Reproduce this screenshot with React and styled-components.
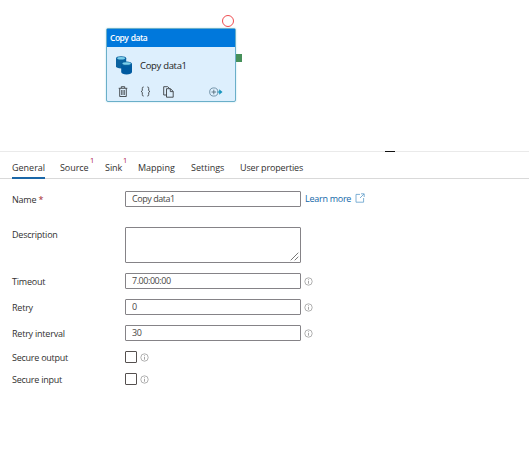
import React from 'react'
import styled, { createGlobalStyle } from 'styled-components'

const GlobalStyle = createGlobalStyle`
  * { box-sizing: border-box; }
  body {
    margin: 0;
    background: #fff;
    color: #323130;
    font-family: "Open Sans", "Noto Sans", sans-serif;
    font-size: 9px;
  }
  input, textarea, button { font-family: inherit; font-size: inherit; }
`

const Page = styled.div`
  height: 473px;
  overflow: hidden;
`

const Canvas = styled.section`
  height: 152px;
  padding: 28px 0 0 106px;
  border-bottom: 1px solid #eaeaea;
  position: relative;
`

const Activity = styled.div`
  position: relative;
  width: 130px;
  height: 74px;
  background: #ddeffd;
  border: 1px solid #6aafc9;
  border-radius: 2px;
  box-shadow: 0 0 2px #b5dcea;
`

const ActivityType = styled.div`
  height: 18px;
  padding-left: 3px;
  line-height: 18px;
  font-size: 8.5px;
  font-weight: 600;
  letter-spacing: -0.5px;
  word-spacing: 0.6px;
  color: #fff;
  background: #0078dc;
`

const ActivityBody = styled.div`
  display: flex;
  align-items: center;
  height: 36px;
  padding-left: 8px;
  gap: 7px;
  font-size: 9.5px;
  letter-spacing: -0.32px;
  color: #222;
`

const ActivityActions = styled.div`
  display: flex;
  align-items: center;
  height: 17px;
  padding: 0 12px 0 11px;
  gap: 12px;
  svg:last-child { margin-left: auto; }
`

const StatusRing = styled.span`
  position: absolute;
  top: -14px;
  left: 115px;
  width: 12px;
  height: 12px;
  border: 1px solid #ee4c50;
  border-radius: 50%;
`

const SuccessPort = styled.span`
  position: absolute;
  top: 25px;
  left: 129px;
  width: 6px;
  height: 8px;
  background: #46905a;
`

const ResizeHandle = styled.span`
  position: absolute;
  left: 385px;
  bottom: -1px;
  width: 10px;
  height: 1px;
  background: #111;
`

const Tabs = styled.nav`
  display: flex;
  height: 27px;
  padding-left: 12px;
  border-bottom: 1px solid #d9d9d9;
`

const Tab = styled.a`
  position: relative;
  width: ${p => p.$width}px;
  height: 27px;
  margin-right: ${p => p.$gap}px;
  line-height: 32px;
  letter-spacing: ${p => p.$spacing || 0}px;
  white-space: nowrap;
  border-bottom: 2px solid ${p => (p.$active ? '#1a67a8' : 'transparent')};
`

const TabCount = styled.sup`
  position: absolute;
  top: 4px;
  left: 100%;
  margin-left: 1px;
  line-height: 8px;
  font-size: 7.5px;
  color: #b0234f;
`

const Form = styled.form`
  padding: 12px 0 0 12px;
`

const Row = styled.div`
  display: flex;
  align-items: flex-start;
  height: ${p => p.$height || 16}px;
  margin-bottom: ${p => p.$gap}px;
`

const Label = styled.label`
  width: 113px;
  line-height: ${p => p.$line || 18}px;
  letter-spacing: ${p => p.$spacing || -0.22}px;
`

const Required = styled.span`
  color: #a4262c;
`

const TextInput = styled.input`
  width: 176px;
  height: 16px;
  padding: 0 6px 1px;
  border: 1px solid #858387;
  border-radius: 1px;
  outline: none;
  color: #484644;
  background: #fff;
  letter-spacing: ${p => p.$spacing || 0}px;
`

const TextBox = styled.div`
  display: flex;
  align-items: flex-end;
  justify-content: flex-end;
  width: 176px;
  height: 36px;
  padding: 0 1px 1px 0;
  border: 1px solid #858387;
  border-radius: 1px;
`

const Checkbox = styled.input`
  appearance: none;
  width: 12px;
  height: 12px;
  margin: 0;
  border: 1px solid #55504f;
  border-radius: 1px;
  background: #fff;
`

const Hint = styled.span`
  display: flex;
  align-items: center;
  height: ${p => p.$height}px;
  margin-left: 3px;
`

const LearnMore = styled.a`
  display: flex;
  align-items: center;
  gap: 4px;
  height: 14px;
  margin-left: 4px;
  color: #1267a8;
  letter-spacing: -0.26px;
`

const DatabaseIcon = () => (
  <svg width="18" height="20" viewBox="0 0 18 20">
    <path d="M1 3.6v7.6c0 1.3 2.2 2.2 5.1 2.2s5.1-.9 5.1-2.2V3.6z" fill="#0a62a0" />
    <ellipse cx="6.1" cy="3.6" rx="5.1" ry="2.3" fill="#0a62a0" />
    <ellipse cx="6.1" cy="3.2" rx="4" ry="1.3" fill="#7ccfea" />
    <path d="M6.2 9v8c0 1.4 2.3 2.4 5.4 2.4S17 18.400 17 17V9z" fill="#005aa0" />
    <ellipse cx="11.6" cy="9" rx="5.4" ry="2.4" fill="#0a62a0" />
    <ellipse cx="11.6" cy="8.5" rx="4.2" ry="1.3" fill="#7ccfea" />
  </svg>
)

const TrashIcon = () => (
  <svg width="10" height="11" viewBox="0 0 10 11" fill="none" stroke="#3b3f43" strokeWidth=".9">
    <path d="M.7 2.3h8.6M3.3 2V.7h3.4V2M1.7 2.5v8h6.6v-8" />
    <path d="M3.6 4v5M5 4v5M6.4 4v5" strokeWidth=".75" />
  </svg>
)

const BracesIcon = () => (
  <svg width="11" height="11" viewBox="0 0 11 11" fill="none" stroke="#3b3f43" strokeWidth=".9">
    <path d="M3.7 1C2.3 1 2.3 1.6 2.3 2.6v1.5c0 .8-.3 1.3-1.3 1.4 1 .1 1.3.6 1.3 1.4v1.5c0 1 0 1.6 1.4 1.6" />
    <path d="M7.3 1c1.4 0 1.4.6 1.4 1.6v1.5c0 .8.3 1.3 1.3 1.4-1 .1-1.3.6-1.3 1.4v1.5c0 1 0 1.6-1.4 1.6" />
  </svg>
)

const CopyIcon = () => (
  <svg width="11" height="12" viewBox="0 0 11 12" fill="none" stroke="#3b3f43" strokeWidth=".9">
    <path d="M3.5 9H.7V.7h4L6.5 2.4" />
    <path d="M3.5 2.7h4l2.7 2.7v5.8H3.5zM7.3 2.8v2.8h2.8" />
  </svg>
)

const AddOutputIcon = () => (
  <svg width="14" height="10" viewBox="0 0 14 10" fill="none">
    <circle cx="4.8" cy="5" r="4.1" stroke="#5c7f95" strokeWidth=".8" />
    <path d="M4.8 2.7v4.6M2.5 5h4.600" stroke="#48606f" strokeWidth=".8" />
    <path d="M8.5 5h3" stroke="#1795bd" />
    <path d="M10.2 2.200 13.5 5l-3.300 2.800z" fill="#1795bd" />
  </svg>
)

const InfoIcon = () => (
  <svg width="9" height="9" viewBox="0 0 9 9" fill="none" stroke="#8f8f8f">
    <circle cx="4.5" cy="4.5" r="3.7" strokeWidth=".7" />
    <path d="M4.5 3.9v2.8M4.5 2.3v.8" strokeWidth=".8" />
  </svg>
)

const ExternalIcon = () => (
  <svg width="10" height="10" viewBox="0 0 10 10" fill="none" stroke="#5f9dca" strokeWidth=".8">
    <path d="M5 1.4H1v7.800h7.600V5" />
    <path d="M6 .8h3.2V4M9 1 5 5" />
  </svg>
)

const ResizeGrip = () => (
  <svg width="9" height="9" viewBox="0 0 9 9" stroke="#555" strokeWidth=".8">
    <path d="M.7 8.3 8.3.7M4.7 8.3l3.6-3.6" />
  </svg>
)

const tabs = [
  { name: 'General', width: 33, gap: 15, active: true },
  { name: 'Source', width: 29, gap: 16, count: 1, spacing: -0.08 },
  { name: 'Sink', width: 17, gap: 16, count: 1, spacing: -0.05 },
  { name: 'Mapping', width: 37, gap: 16 },
  { name: 'Settings', width: 33, gap: 16 },
  { name: 'User properties', width: 64, gap: 0, spacing: -0.17 },
]

const fields = [
  { name: 'Timeout', value: '7.00:00:00', gap: 10, spacing: -0.45 },
  { name: 'Retry', value: '0', gap: 10 },
  { name: 'Retry interval', value: '30', gap: 10, spacing: -0.3 },
]

export default function App() {
  return (
    <Page>
      <GlobalStyle />
      <Canvas>
        <Activity>
          <ActivityType>Copy data</ActivityType>
          <ActivityBody>
            <DatabaseIcon />
            <span>Copy data1</span>
          </ActivityBody>
          <ActivityActions>
            <TrashIcon />
            <BracesIcon />
            <CopyIcon />
            <AddOutputIcon />
          </ActivityActions>
          <StatusRing />
          <SuccessPort />
        </Activity>
        <ResizeHandle />
      </Canvas>
      <Tabs>
        {tabs.map(tab => (
          <Tab key={tab.name} $width={tab.width} $gap={tab.gap} $spacing={tab.spacing} $active={tab.active}>
            {tab.name}
            {tab.count && <TabCount>{tab.count}</TabCount>}
          </Tab>
        ))}
      </Tabs>
      <Form>
        <Row $gap={20}>
          <Label>Name <Required>*</Required></Label>
          <TextInput defaultValue="Copy data1" $spacing={-0.45} />
          <LearnMore>Learn more <ExternalIcon /></LearnMore>
        </Row>
        <Row $height={36} $gap={10}>
          <Label $line={16}>Description</Label>
          <TextBox><ResizeGrip /></TextBox>
        </Row>
        {fields.map(field => (
          <Row key={field.name} $gap={field.gap}>
            <Label>{field.name}</Label>
            <TextInput defaultValue={field.value} $spacing={field.spacing} />
            <Hint $height={16}><InfoIcon /></Hint>
          </Row>
        ))}
        {['Secure output', 'Secure input'].map(name => (
          <Row key={name} $height={12} $gap={10}>
            <Label $line={14} $spacing={-0.25}>{name}</Label>
            <Checkbox type="checkbox" />
            <Hint $height={12}><InfoIcon /></Hint>
          </Row>
        ))}
      </Form>
    </Page>
  )
}
